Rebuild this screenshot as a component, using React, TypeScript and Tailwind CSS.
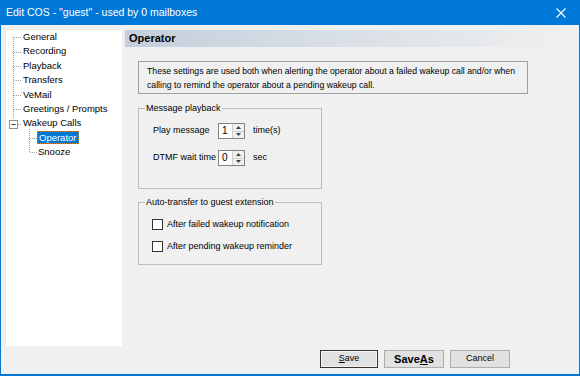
import React from "react";

const font = "font-['Liberation_Sans',Arial,sans-serif]";

const treeItems = [
  "General",
  "Recording",
  "Playback",
  "Transfers",
  "VeMail",
  "Greetings / Prompts",
  "Wakeup Calls",
];

const TreeLines = () => {
  const row = (i: number) => 7.2 + i * 14.4;
  return (
    <svg
      className="pointer-events-none absolute left-0 top-0"
      width="116"
      height="316"
      viewBox="0 0 116 316"
    >
      <g stroke="#a0a0a0" strokeWidth="1" strokeDasharray="1 1" fill="none">
        <line x1="7.5" y1="7" x2="7.5" y2="89" />
        {[0, 1, 2, 3, 4, 5].map((i) => (
          <line key={i} x1="8" y1={Math.round(row(i)) + 0.5} x2="16" y2={Math.round(row(i)) + 0.5} />
        ))}
        <line x1="12" y1="94.5" x2="16" y2="94.5" />
        <line x1="23.5" y1="99" x2="23.5" y2="122" />
        <line x1="24" y1="108.5" x2="32" y2="108.5" />
        <line x1="24" y1="122.5" x2="32" y2="122.5" />
      </g>
      <rect x="3.5" y="90.5" width="8" height="8" fill="#fff" stroke="#919191" />
      <line x1="5.5" y1="94.5" x2="9.5" y2="94.5" stroke="#333" />
    </svg>
  );
};

const Spinner = ({ value }: { value: string }) => (
  <div className="flex h-[16px] w-[27px] border border-[#828282] bg-white">
    <div className="flex-1 pl-[3px] text-[10px] leading-[14px]">{value}</div>
    <div className="flex w-[12px] flex-col border-l border-[#d0d0d0] bg-[#f0f0f0]">
      <div className="flex flex-1 items-center justify-center border-b border-[#d0d0d0]">
        <svg width="5" height="3" viewBox="0 0 5 3">
          <path d="M0 3 L2.5 0 L5 3 Z" fill="#404040" />
        </svg>
      </div>
      <div className="flex flex-1 items-center justify-center">
        <svg width="5" height="3" viewBox="0 0 5 3">
          <path d="M0 0 L2.5 3 L5 0 Z" fill="#404040" />
        </svg>
      </div>
    </div>
  </div>
);

const Check = ({ label }: { label: string }) => (
  <div className="flex h-[11px] items-center">
    <div className="h-[11px] w-[11px] border border-[#333] bg-white" />
    <span className="ml-[4px]">{label}</span>
  </div>
);

export default function App() {
  return (
    <div className={`${font} flex h-[376px] w-[580px] flex-col bg-[#0078d7] text-black`}>
      {/* title bar */}
      <div className="flex h-[25px] shrink-0 items-center justify-between pl-[6px] pr-[14px] text-[10.5px] text-white">
        <span>Edit COS - "guest" - used by 0 mailboxes</span>
        <svg width="10" height="10" viewBox="0 0 10 10">
          <path d="M0.5 0.5 L9.5 9.5 M9.5 0.5 L0.5 9.5" stroke="#fff" strokeWidth="1.1" />
        </svg>
      </div>

      <div className="mx-[1px] mb-[2px] flex flex-1 flex-col bg-[#f0f0f0]">
        <div className="flex pt-[5px]">
          {/* tree */}
          <div className="relative ml-[5px] h-[316px] w-[116px] shrink-0 bg-white text-[9.5px] leading-[14.4px]">
            <TreeLines />
            {treeItems.map((t) => (
              <div key={t} className="pl-[17px]">
                {t}
              </div>
            ))}
            <div className="pl-[31px]">
              <span className="border border-dotted border-[#d08a3a] bg-[#0078d7] px-[1px] text-white">
                Operator
              </span>
            </div>
            <div className="pl-[32px]">Snooze</div>
          </div>

          {/* content */}
          <div className="ml-[3px] mr-[8px] flex-1 text-[9px]">
            <div className="flex h-[17px] items-center bg-linear-to-r from-[#c3cfdc] to-[#f0f0f0] pl-[4px] text-[11px] font-bold">
              Operator
            </div>

            <div className="ml-[13px] mt-[14px] h-[33px] w-[390px] whitespace-nowrap border border-[#a0a0a0] pl-[8px] pt-[2px] text-[8.7px] leading-[14px]">
              These settings are used both when alerting the operator about a failed wakeup call and/or when
              <br />
              calling to remind the operator about a pending wakeup call.
            </div>

            <fieldset className="ml-[13px] mt-[9px] h-[86px] w-[184px] border border-[#bdbdbd] pl-[14px]">
              <legend className="-ml-[8px] px-[1px] leading-[11px]">Message playback</legend>
              <div className="mt-[9px] flex h-[16px] items-center">
                <span className="w-[65px]">Play message</span>
                <Spinner value="1" />
                <span className="ml-[8px]">time(s)</span>
              </div>
              <div className="mt-[11px] flex h-[16px] items-center">
                <span className="w-[65px]">DTMF wait time</span>
                <Spinner value="0" />
                <span className="ml-[8px]">sec</span>
              </div>
            </fieldset>

            <fieldset className="ml-[13px] mt-[8px] h-[68px] w-[184px] border border-[#bdbdbd] pl-[13px]">
              <legend className="-ml-[7px] px-[1px] leading-[11px]">Auto-transfer to guest extension</legend>
              <div className="mt-[11px]">
                <Check label="After failed wakeup notification" />
              </div>
              <div className="mt-[11px]">
                <Check label="After pending wakeup reminder" />
              </div>
            </fieldset>
          </div>
        </div>

        {/* buttons */}
        <div className="mt-[4px] flex justify-end gap-[6px] pr-[69px] text-[9px]">
          <button className="flex h-[18px] w-[58px] items-center justify-center border border-[#333] bg-[#e1e1e1] shadow-[inset_0_0_0_1px_#f5f5f5]">
            <span>
              <span className="underline">S</span>ave
            </span>
          </button>
          <button className="flex h-[18px] w-[60px] items-center justify-center border border-[#adadad] bg-[#e1e1e1] text-[11px] font-semibold">
            <span>
              Save<span className="underline">A</span>s
            </span>
          </button>
          <button className="flex h-[18px] w-[60px] items-center justify-center border border-[#adadad] bg-[#e1e1e1]">
            Cancel
          </button>
        </div>
      </div>
    </div>
  );
}
